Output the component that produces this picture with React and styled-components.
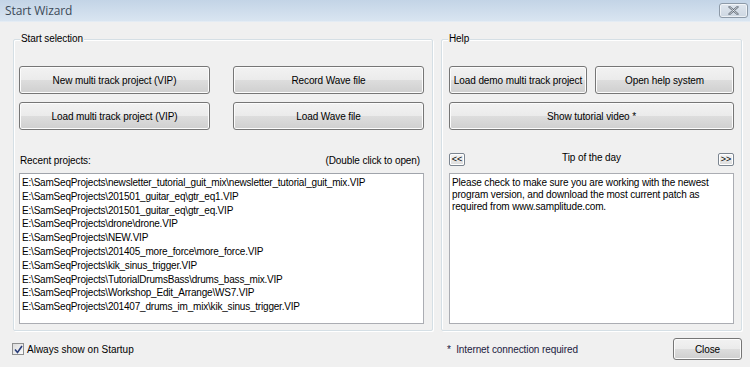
import React from "react";
import styled, { createGlobalStyle } from "styled-components";

const Global = createGlobalStyle`
  html, body { margin: 0; padding: 0; background: #f0f0f0; }
  body { font-family: "Liberation Sans", Arial, sans-serif; font-size: 10px; color: #000; }
  * { box-sizing: border-box; }
`;

const Window = styled.div`
  width: 750px;
  height: 367px;
  display: flex;
  flex-direction: column;
  background: #f0f0f0;
  overflow: hidden;
`;

const TitleBar = styled.div`
  height: 22px;
  flex: none;
  display: flex;
  align-items: center;
  justify-content: space-between;
  padding: 0 2px 0 5px;
  background: linear-gradient(#c3d4e6, #d9e5f1);
  border-bottom: 1px solid #e4ecf4;
`;

const Title = styled.div`
  font-family: "Open Sans", "Liberation Sans", sans-serif;
  font-size: 12px;
  color: #3c4a58;
  letter-spacing: -0.1px;
`;

const CloseX = styled.div`
  width: 29px;
  height: 15px;
  border: 1px solid #8d9aa8;
  border-radius: 3px;
  background: linear-gradient(#dfe6ee, #cdd7e2);
  display: flex;
  align-items: center;
  justify-content: center;
  box-shadow: inset 0 0 0 1px rgba(255,255,255,0.6);
`;

const Body = styled.div`
  flex: 1;
  display: flex;
  flex-direction: column;
  padding: 17px 9px 0 13px;
`;

const Panels = styled.div`
  display: flex;
  gap: 8px;
  height: 292px;
`;

const Group = styled.div`
  position: relative;
  width: ${(p) => p.$w}px;
  border: 1px solid #d5dfe5;
  box-shadow: inset 1px 1px 0 #fff, 1px 1px 0 #fff;
  border-radius: 2px;
  padding: 26px ${(p) => p.$pr}px 6px ${(p) => p.$pl}px;
  display: flex;
  flex-direction: column;
`;

const GroupLabel = styled.span`
  position: absolute;
  top: -8px;
  left: 6px;
  padding: 0 1px;
  background: #f0f0f0;
  line-height: 13px;
  letter-spacing: -0.1px;
`;

const ButtonGrid = styled.div`
  display: grid;
  grid-template-columns: ${(p) => p.$cols};
  column-gap: ${(p) => p.$gap}px;
  row-gap: 8px;
`;

const Button = styled.button`
  grid-column: ${(p) => (p.$span ? "1 / -1" : "auto")};
  height: 28px;
  font-family: "Liberation Sans", Arial, sans-serif;
  font-size: 10px;
  letter-spacing: -0.1px;
  color: #000;
  padding: 0;
  border: 1px solid #767676;
  border-radius: 3px;
  background: linear-gradient(#f2f2f2 0%, #ebebeb 50%, #dddddd 51%, #cfcfcf 100%);
  box-shadow: inset 0 0 0 1px #fcfcfc;
  white-space: nowrap;
`;

const ListHeader = styled.div`
  display: flex;
  justify-content: space-between;
  align-items: center;
  height: 13px;
  margin: 24px 0 6px 0;
  padding: 0 4px 0 1px;
  letter-spacing: -0.1px;
`;

const ListBox = styled.div`
  flex: 1;
  background: #fff;
  border: 1px solid #abadb3;
  border-top-color: #a0a4ab;
  padding: 2px 2px;
`;

const ListItem = styled.div`
  line-height: 13.8px;
  white-space: nowrap;
  letter-spacing: -0.2px;
`;

const TipRow = styled.div`
  display: flex;
  align-items: flex-start;
  justify-content: space-between;
  margin: 23px 0 7px 0;
  height: 13px;
`;

const SmallButton = styled.button`
  width: 16px;
  height: 13px;
  padding: 0;
  font-family: "Liberation Sans", Arial, sans-serif;
  font-size: 9px;
  line-height: 9px;
  color: #000;
  border: 1px solid #7c8590;
  border-radius: 2px;
  background: linear-gradient(#f6f6f6, #dcdcdc);
  box-shadow: inset 0 0 0 1px #fff;
`;

const TipTitle = styled.span`
  letter-spacing: -0.1px;
  line-height: 10px;
`;

const TipBox = styled.div`
  flex: 1;
  background: #fff;
  border: 1px solid #abadb3;
  padding: 3px 2px;
  line-height: 12px;
  letter-spacing: -0.15px;
`;

const Footer = styled.div`
  display: flex;
  align-items: center;
  height: 36px;
`;

const CheckWrap = styled.label`
  display: flex;
  align-items: center;
  gap: 3px;
  margin-left: -1px;
  width: 435px;
`;

const CheckBox = styled.span`
  width: 12px;
  height: 12px;
  border: 1px solid #8e8f8f;
  background: linear-gradient(135deg, #dcdcdc, #fafafa);
  display: flex;
  align-items: center;
  justify-content: center;
`;

const Note = styled.div`
  flex: 1;
  color: #1a1a40;
  letter-spacing: -0.1px;
  padding-top: 1px;
`;

const CloseButton = styled(Button)`
  width: 69px;
  height: 22px;
  margin-right: -1px;
`;

const recent = [
  "E:\\SamSeqProjects\\newsletter_tutorial_guit_mix\\newsletter_tutorial_guit_mix.VIP",
  "E:\\SamSeqProjects\\201501_guitar_eq\\gtr_eq1.VIP",
  "E:\\SamSeqProjects\\201501_guitar_eq\\gtr_eq.VIP",
  "E:\\SamSeqProjects\\drone\\drone.VIP",
  "E:\\SamSeqProjects\\NEW.VIP",
  "E:\\SamSeqProjects\\201405_more_force\\more_force.VIP",
  "E:\\SamSeqProjects\\kik_sinus_trigger.VIP",
  "E:\\SamSeqProjects\\TutorialDrumsBass\\drums_bass_mix.VIP",
  "E:\\SamSeqProjects\\Workshop_Edit_Arrange\\WS7.VIP",
  "E:\\SamSeqProjects\\201407_drums_im_mix\\kik_sinus_trigger.VIP",
];

export default function App() {
  return (
    <Window>
      <Global />
      <TitleBar>
        <Title>Start Wizard</Title>
        <CloseX>
          <svg width="11" height="9" viewBox="0 0 11 9">
            <path d="M1.5 1 L9.5 8 M9.5 1 L1.5 8" stroke="#5b6572" strokeWidth="2.2" strokeLinecap="round" />
            <path d="M1.5 1 L9.5 8 M9.5 1 L1.5 8" stroke="#f4f6f8" strokeWidth="0.8" strokeLinecap="round" />
          </svg>
        </CloseX>
      </TitleBar>
      <Body>
        <Panels>
          <Group $w={420} $pl={5} $pr={8}>
            <GroupLabel>Start selection</GroupLabel>
            <ButtonGrid $cols="191px 191px" $gap={23}>
              <Button>New multi track project (VIP)</Button>
              <Button>Record Wave file</Button>
              <Button>Load multi track project (VIP)</Button>
              <Button>Load Wave file</Button>
            </ButtonGrid>
            <ListHeader>
              <span>Recent projects:</span>
              <span>(Double click to open)</span>
            </ListHeader>
            <ListBox>
              {recent.map((r) => (
                <ListItem key={r}>{r}</ListItem>
              ))}
            </ListBox>
          </Group>
          <Group $w={302} $pl={7} $pr={7}>
            <GroupLabel>Help</GroupLabel>
            <ButtonGrid $cols="138px 139px" $gap={8}>
              <Button>Load demo multi track project</Button>
              <Button>Open help system</Button>
              <Button $span>Show tutorial video *</Button>
            </ButtonGrid>
            <TipRow>
              <SmallButton>&lt;&lt;</SmallButton>
              <TipTitle>Tip of the day</TipTitle>
              <SmallButton>&gt;&gt;</SmallButton>
            </TipRow>
            <TipBox>
              Please check to make sure you are working with the newest program version, and download the most current patch as required from www.samplitude.com.
            </TipBox>
          </Group>
        </Panels>
        <Footer>
          <CheckWrap>
            <CheckBox>
              <svg width="9" height="9" viewBox="0 0 9 9">
                <path d="M1 4.5 L3.5 7.5 L8 1" fill="none" stroke="#2a3e7a" strokeWidth="1.6" />
              </svg>
            </CheckBox>
            <span>Always show on Startup</span>
          </CheckWrap>
          <Note>*&nbsp; Internet connection required</Note>
          <CloseButton>Close</CloseButton>
        </Footer>
      </Body>
    </Window>
  );
}
